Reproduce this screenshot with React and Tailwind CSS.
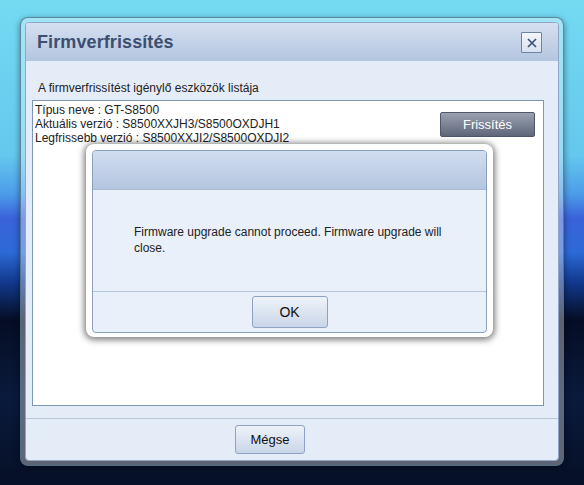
export default function App() {
  return (
    <div className="relative w-[584px] h-[485px] overflow-hidden font-['Liberation_Sans',Arial,sans-serif] bg-[linear-gradient(180deg,#74daf2_0%,#64c8ee_32%,#4c9ce8_40%,#3a62da_45%,#2c6ad6_52%,#123a90_58%,#050d24_66%,#0a1a3c_82%,#061026_100%)] pt-[17px] pl-[20px]">
      {/* Main window */}
      <div className="w-[544px] h-[449px] rounded-[8px] border border-[#4a6f86]/80 bg-white/35 p-[4px] shadow-[0_2px_6px_rgba(0,0,0,0.45)]">
        <div className="flex flex-col h-full rounded-[4px] border border-[#8fa6c4] bg-[#e4ecf7] overflow-hidden">
          {/* Title bar */}
          <div className="flex items-center justify-between h-[38px] shrink-0 bg-[linear-gradient(180deg,#d5e0f1,#b4c5df)] pl-[11px] pr-[16px]">
            <span className="text-[18px] font-bold text-[#3d4f70] tracking-[0.1px]">Firmverfrissítés</span>
            <button
              type="button"
              className="flex items-center justify-center w-[21px] h-[21px] mt-[1px] border border-[#6c82a3] rounded-[1px] bg-[linear-gradient(180deg,#f4f7fc,#d7e1ef)]"
            >
              <svg width="10" height="10" viewBox="0 0 10 10">
                <path d="M1 1L9 9M9 1L1 9" stroke="#3a5278" strokeWidth="1.7" />
              </svg>
            </button>
          </div>

          {/* Body */}
          <div className="flex-1 flex flex-col pl-[6px] pr-[14px] pt-[20px] pb-[12px]">
            <div className="text-[12px] leading-[14px] text-[#222] pl-[6px] mb-[5px]">
              A firmverfrissítést igénylő eszközök listája
            </div>
            <div className="flex-1 flex justify-between border border-[#7f97b6] bg-white pl-[2px] pr-[8px] pt-[2px]">
              <div className="text-[12px] leading-[14px] text-[#222]">
                <div>Típus neve : GT-S8500</div>
                <div>Aktuális verzió : S8500XXJH3/S8500OXDJH1</div>
                <div>Legfrissebb verzió : S8500XXJI2/S8500OXDJI2</div>
              </div>
              <button
                type="button"
                className="mt-[9px] w-[95px] h-[25px] rounded-[2px] border border-[#4f5668] bg-[linear-gradient(180deg,#9aa1b0,#5e667a)] text-white text-[13px]"
              >
                Frissítés
              </button>
            </div>
          </div>

          {/* Footer */}
          <div className="h-[42px] shrink-0 border-t border-[#b9c7da] flex justify-center pt-[6px] pr-[44px]">
            <button
              type="button"
              className="w-[70px] h-[29px] rounded-[3px] border border-[#8ea3c1] bg-[linear-gradient(180deg,#eef3fa,#c9d6e8)] text-[13px] text-[#111]"
            >
              Mégse
            </button>
          </div>
        </div>
      </div>

      {/* Message dialog overlay */}
      <div className="absolute left-[86px] top-[144px] w-[407px] h-[193px] rounded-[8px] bg-white p-[6px] pb-[4px] shadow-[0_1px_6px_2px_rgba(0,0,0,0.5)]">
        <div className="flex flex-col h-full rounded-[4px] border border-[#8aa0c0] bg-[#eaf0fa] overflow-hidden">
          <div className="h-[39px] shrink-0 bg-[linear-gradient(180deg,#d1ddf0,#b4c5df)] border-b border-[#a9bbd4]" />
          <div className="flex-1 pl-[41px] pr-[30px] pt-[34px] text-[12px] leading-[16px] text-[#222]">
            Firmware upgrade cannot proceed. Firmware upgrade will close.
          </div>
          <div className="h-[41px] shrink-0 border-t border-[#b6c4d7] flex justify-center pt-[4px]">
            <button
              type="button"
              className="w-[76px] h-[32px] rounded-[3px] border border-[#8ea3c1] bg-[linear-gradient(180deg,#eef3fa,#c9d6e8)] text-[14px] text-[#111]"
            >
              OK
            </button>
          </div>
        </div>
      </div>
    </div>
  );
}
